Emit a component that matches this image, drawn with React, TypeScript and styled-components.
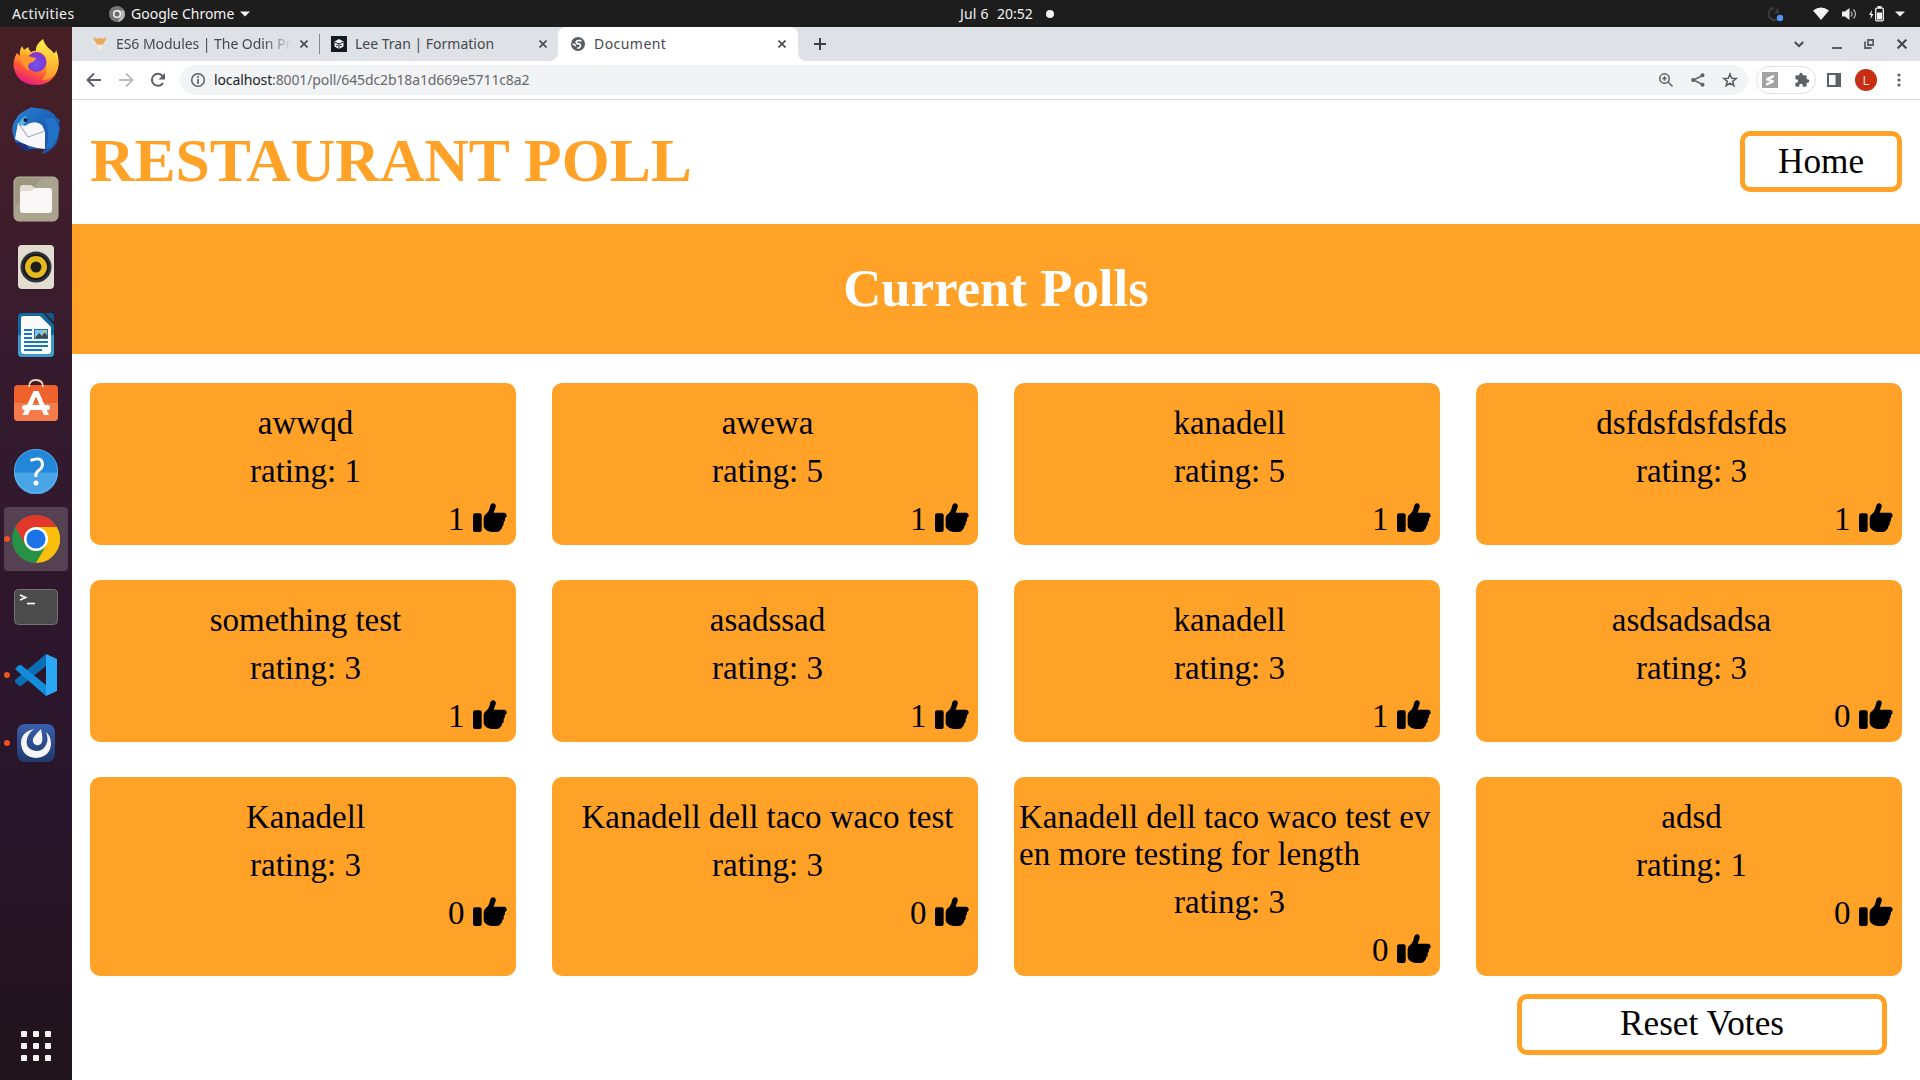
import React from "react";
import styled, { createGlobalStyle, css } from "styled-components";

const orange = "#ffa227";
const ui = `"Noto Sans", "Open Sans", sans-serif`;

const Global = createGlobalStyle`
  *, *::before, *::after { box-sizing: border-box; }
  html, body { margin: 0; padding: 0; overflow: hidden; background: #fff; }
  button { font: inherit; color: inherit; }
`;

const Desktop = styled.div`
  width: 1920px;
  height: 1080px;
  display: grid;
  grid-template: 27px 1fr / 72px 1fr;
  font-family: ${ui};
`;

const TopBar = styled.header`
  grid-column: 1 / 3;
  display: grid;
  grid-template-columns: 948px auto 1fr;
  align-items: center;
  background: #1d1d1d;
  color: #f2f2f2;
  font-size: 14px;
  line-height: 27px;
  padding: 0 7px 0 12px;
`;

const BarGroup = styled.div<{ $end?: boolean }>`
  display: flex;
  align-items: center;
  height: 27px;
  ${(p) => p.$end && css`justify-content: flex-end;`}
  svg { display: block; }
`;

const BarText = styled.span<{ $w: number; $ls?: number }>`
  width: ${(p) => p.$w}px;
  letter-spacing: ${(p) => p.$ls ?? 0}px;
  white-space: nowrap;
`;

const Gap = styled.span<{ $w: number }>`
  flex: none;
  width: ${(p) => p.$w}px;
`;

const Dock = styled.nav`
  display: flex;
  flex-direction: column;
  align-items: center;
  gap: 4px;
  padding: 4px 0 2px;
  background: linear-gradient(#472025 0, #421e2a 12%, #371b2e 30%, #2e172c 55%, #28152a 75%, #23141f 90%, #20141c 100%);
`;

const DockItem = styled.div<{ $active?: boolean; $running?: boolean; $last?: boolean; $lift?: number }>`
  width: 64px;
  height: 64px;
  padding-bottom: ${(p) => (p.$lift ?? 0) * 2}px;
  border-radius: 4px;
  display: flex;
  align-items: center;
  justify-content: center;
  position: relative;
  ${(p) => p.$active && css`background: #564152;`}
  ${(p) => p.$last && css`margin-top: auto;`}
  ${(p) =>
    p.$running &&
    css`
      &::before {
        content: "";
        position: absolute;
        left: 0;
        top: 29px;
        width: 6px;
        height: 6px;
        border-radius: 50%;
        background: #e95420;
      }
    `}
  svg { display: block; }
`;

const Browser = styled.section`
  display: flex;
  flex-direction: column;
  min-width: 0;
  background: #fff;
`;

const TabStrip = styled.div`
  flex: none;
  height: 34px;
  display: flex;
  align-items: center;
  background: #dee1e6;
  color: #45494d;
  font-size: 14px;
`;

const Tab = styled.div<{ $w: number; $active?: boolean; $divider?: boolean; $pad: number }>`
  width: ${(p) => p.$w}px;
  height: 34px;
  display: flex;
  align-items: center;
  padding: 0 9px 0 ${(p) => p.$pad}px;
  position: relative;
  svg { display: block; flex: none; }
  ${(p) =>
    p.$active &&
    css`
      background: #fff;
      border-radius: 8px 8px 0 0;
      &::before, &::after {
        content: "";
        position: absolute;
        bottom: 0;
        width: 8px;
        height: 8px;
      }
      &::before { left: -8px; background: radial-gradient(circle at 0 0, transparent 7.5px, #fff 8px); }
      &::after { right: -8px; background: radial-gradient(circle at 100% 0, transparent 7.5px, #fff 8px); }
    `}
  ${(p) =>
    p.$divider &&
    css`
      &::after {
        content: "";
        position: absolute;
        right: 0;
        top: 7px;
        width: 1px;
        height: 20px;
        background: #85898e;
      }
    `}
`;

const TabTitle = styled.span<{ $fade?: boolean; $ls?: number }>`
  flex: 1;
  min-width: 0;
  white-space: nowrap;
  line-height: 20px;
  letter-spacing: ${(p) => p.$ls ?? 0}px;
  ${(p) => p.$fade && css`mask-image: linear-gradient(90deg, #000 calc(100% - 28px), transparent 100%);`}
`;

const WindowControls = styled.div`
  margin-left: auto;
  display: flex;
  align-items: center;
  padding-right: 11px;
  svg { display: block; }
`;

const Toolbar = styled.div`
  flex: none;
  height: 39px;
  display: flex;
  align-items: center;
  border-bottom: 1px solid #d9dbde;
  padding-left: 14px;
  color: #5f6368;
  svg { display: block; flex: none; }
`;

const Address = styled.div`
  width: 1568px;
  height: 30px;
  border-radius: 15px;
  background: #f1f3f4;
  display: flex;
  align-items: center;
  padding: 0 10px;
  font-size: 14px;
  line-height: 20px;
`;

const Url = styled.span`
  flex: 1;
  margin-left: 8px;
  letter-spacing: -0.12px;
  color: #67696d;
  b { font-weight: 400; color: #202124; }
`;

const Extensions = styled.div`
  width: 60px;
  height: 28px;
  margin-left: 8px;
  border: 1px solid #dfe1e4;
  border-radius: 14px;
  display: flex;
  align-items: center;
  justify-content: space-between;
  padding: 0 5px;
`;

const Avatar = styled.div`
  width: 22px;
  height: 22px;
  border-radius: 50%;
  background: #c62f14;
  color: #f0dcd8;
  font: 13px/22px ${ui};
  text-align: center;
`;

const Page = styled.main`
  flex: 1;
  display: flex;
  flex-direction: column;
  font-family: "Liberation Serif", "Times New Roman", serif;
  font-size: 33px;
  line-height: 37px;
  color: #000;
`;

const PageHeader = styled.div`
  height: 124px;
  display: flex;
  align-items: center;
  justify-content: space-between;
  padding: 0 18px 1px;
`;

const Brand = styled.h1`
  margin: 0;
  padding-bottom: 3px;
  color: ${orange};
  font-size: 61.6px;
  line-height: 72px;
  font-weight: 700;
`;

const OutlineButton = styled.button<{ $w: number; $top?: number }>`
  width: ${(p) => p.$w}px;
  height: 61px;
  padding: ${(p) => p.$top ?? 0}px 0 1px;
  border: 5px solid ${orange};
  border-radius: 10px;
  background: #fff;
  font-size: 35.2px;
  line-height: 40px;
`;

const Banner = styled.h2`
  margin: 0;
  height: 130px;
  background: ${orange};
  color: #fff;
  font-size: 52.8px;
  line-height: 128px;
  font-weight: 700;
  text-align: center;
`;

const Grid = styled.div`
  display: grid;
  grid-template-columns: repeat(4, 426px);
  grid-template-rows: 162px 162px 199px;
  gap: 35px 36px;
  padding: 29px 18px 0;
`;

const Card = styled.article`
  background: ${orange};
  border-radius: 10px;
  padding: 22px 0 0 5px;
  display: flex;
  flex-direction: column;
  align-items: center;
  gap: 11px;
`;

const Name = styled.div`
  word-break: break-all;
`;

const Votes = styled.div`
  align-self: flex-end;
  display: flex;
  align-items: flex-start;
  gap: 8px;
  padding-right: 9.5px;
  svg { display: block; margin-top: 2px; }
`;

const Footer = styled.div`
  display: flex;
  justify-content: flex-end;
  padding: 18px 33px 0 0;
`;

const polls = [
  { name: "awwqd", rating: 1, votes: 1 },
  { name: "awewa", rating: 5, votes: 1 },
  { name: "kanadell", rating: 5, votes: 1 },
  { name: "dsfdsfdsfdsfds", rating: 3, votes: 1 },
  { name: "something test", rating: 3, votes: 1 },
  { name: "asadssad", rating: 3, votes: 1 },
  { name: "kanadell", rating: 3, votes: 1 },
  { name: "asdsadsadsa", rating: 3, votes: 0 },
  { name: "Kanadell", rating: 3, votes: 0 },
  { name: "Kanadell dell taco waco test", rating: 3, votes: 0 },
  { name: "Kanadell dell taco waco test even more testing for length", rating: 3, votes: 0 },
  { name: "adsd", rating: 1, votes: 0 },
];

const Thumb = () => (
  <svg width="34" height="30" viewBox="0 0 102 90">
    <rect x="0" y="31" width="26" height="56" rx="6" />
    <path d="M32 46Q32 37 39 33Q46 29 49 19L52 7Q55 0 62 1Q70 4 68 12L62 29H94Q102 31 101 39Q100 44 96 45Q98 53 92 58Q94 66 88 70Q88 77 83 80Q80 87 70 87H55Q43 86 36 78Q32 74 32 68Z" />
  </svg>
);

const Caret = ({ w = 10 }: { w?: number }) => (
  <svg width={w} height="6" viewBox="0 0 10 6"><path d="M0 .5h10L5 5.500z" fill="#f2f2f2" /></svg>
);

const Close = ({ s = 8, w = 1.6 }: { s?: number; w?: number }) => (
  <svg width={s} height={s} viewBox="0 0 8 8" stroke="#45494d" strokeWidth={w}><path d="M.5.5l7 7M7.500.5l-7 7" /></svg>
);

const FirefoxIcon = () => (
  <svg width="48" height="48" viewBox="0 0 48 48">
    <defs>
      <linearGradient id="ffa" x1=".8" y1=".05" x2=".3" y2="1">
        <stop offset="0" stopColor="#fff44f" /><stop offset=".35" stopColor="#ffb52b" />
        <stop offset=".65" stopColor="#ff5a36" /><stop offset="1" stopColor="#e31587" />
      </linearGradient>
      <radialGradient id="ffb" cx=".5" cy=".6" r=".6"><stop offset="0" stopColor="#7a52f5" /><stop offset=".6" stopColor="#7540d8" /><stop offset="1" stopColor="#a02bc0" /></radialGradient>
      <linearGradient id="ffc" x1="0" y1="0" x2="0" y2="1"><stop offset="0" stopColor="#fff04a" /><stop offset="1" stopColor="#ff9a2b" /></linearGradient>
    </defs>
    <path d="M8 18Q7 13 10 8L12 12L16 9Q17 12 19 14Q24 11 30 14L38 14Q44 17 44 12Q48 22 46 30Q42 45 27 47Q7 48 2 31Q0 23 5 15Z" fill="url(#ffa)" />
    <path d="M24 13Q23 7 31 1Q33 8 39 12Q48 20 46 30Q42 42 30 42Q37 35 34 26Q32 16 24 13Z" fill="url(#ffc)" />
    <circle cx="24.500" cy="24" r="10" fill="url(#ffb)" />
    <path d="M8 18Q13 15 16 18L24 20Q24 23 18 25Q14 28 18 33Q11 31 8 18Z" fill="#ff982b" />
  </svg>
);

const ThunderbirdIcon = () => (
  <svg width="50" height="50" viewBox="0 0 50 50">
    <defs><linearGradient id="tb" x1="0" y1="0" x2="1" y2="1"><stop offset="0" stopColor="#2b85d6" /><stop offset=".5" stopColor="#1c62b8" /><stop offset="1" stopColor="#1b4fa5" /></linearGradient></defs>
    <path d="M4 35Q-2 22 5 13Q8 7 17 3L21 1L23 2Q39 1 46 12L49 14L48 18L49 22L48 28L47 33L45 38Q40 46 30 48L34 43H18Q8 42 4 35Z" fill="url(#tb)" />
    <path d="M5 36Q11 45 19 46L15 38Z" fill="#1d2f79" />
    <path d="M7 17Q14 22 17 18Q25 14 31 19L34 26L34 43Q18 42 4 33Z" fill="#f8f8fa" />
    <path d="M8 18L17 31L34 25" fill="none" stroke="#a9adb8" strokeWidth="1.200" />
    <path d="M32 12Q41 22 35 43Q42 42 45 35Q51 23 43 12Z" fill="#2273c8" />
    <path d="M8 20Q8 13 15 10Q18 14 12 19Z" fill="#5bb3e8" />
    <circle cx="14.500" cy="14" r="2" fill="#16233f" />
  </svg>
);

const FilesIcon = () => (
  <svg width="46" height="46" viewBox="0 0 46 46">
    <rect x="1" y="1" width="44" height="44" rx="5" fill="#9e9780" stroke="#bbb5a3" />
    <path d="M1.500 30L30 1.500H40Q44.500 2 44.500 6V40Q44 44.500 40 44.500H6Q1.500 44 1.500 40Z" fill="#aaa48f" />
    <path d="M7 12Q7 9 10 9H18L22 12V22H7Z" fill="#e2ddd0" />
    <path d="M7 18Q7 15 10 15H18L22 12H36Q39 12 39 15V34Q39 37 36 37H10Q7 37 7 34Z" fill="#f9f8f6" />
  </svg>
);

const RhythmboxIcon = () => (
  <svg width="38" height="46" viewBox="0 0 38 46">
    <rect x="1" y="1" width="36" height="44" rx="4" fill="#e2ddd0" />
    <circle cx="19" cy="23" r="15.500" fill="#30323a" /><circle cx="19" cy="23" r="13" fill="#17181b" />
    <circle cx="19" cy="23" r="11" fill="#e6b91d" /><circle cx="19" cy="23" r="5.500" fill="#1f1f1f" />
  </svg>
);

const WriterIcon = () => (
  <svg width="38" height="46" viewBox="0 0 38 46">
    <path d="M5 1H26L37 13V41Q37 45 33 45H5Q1 45 1 41V5Q1 1 5 1Z" fill="#106a9f" />
    <path d="M1 23H37V41Q37 45 33 45H5Q1 45 1 41Z" fill="#3e9bcb" />
    <path d="M6 4H23L34 15V39Q34 42 31 42H7Q4 42 4 39V7Q4 4 6 4Z" fill="#fafafa" />
    <path d="M28 1H34Q37 1 37 4V10Z" fill="#0e5c8c" />
    <path d="M7 18h8M7 22h8M7 26h8M7 30h24M7 34h24M7 38h18" stroke="#1879b1" strokeWidth="2" />
    <rect x="17.500" y="17.500" width="13" height="9" fill="#7fc5ef" stroke="#1879b1" />
    <path d="M18 26l4-5 3 3 3-4 3 6z" fill="#454545" /><circle cx="28" cy="19.500" r="1.300" fill="#f2c230" />
  </svg>
);

const SoftwareIcon = () => (
  <svg width="46" height="46" viewBox="0 0 46 46">
    <rect x="1" y="8" width="44" height="36" rx="4" fill="#f0622c" />
    <path d="M1 26H45V40Q45 44 41 44H5Q1 44 1 40Z" fill="#f47b4c" />
    <path d="M16 10Q16 3 23 3Q30 3 30 10" fill="none" stroke="#e9d9ae" strokeWidth="1.800" />
    <path d="M20.500 14H25.500L36 38H31L23 19.500L15 38H9.500Z" fill="#fff" />
    <rect x="9" y="28" width="28" height="5" rx="2.500" fill="#fff" />
  </svg>
);

const HelpIcon = () => (
  <svg width="46" height="46" viewBox="0 0 46 46">
    <circle cx="23" cy="23" r="22" fill="#2287d8" />
    <path d="M1 24.500H45A22 22 0 0 1 1 24.500Z" fill="#48a4e5" />
    <circle cx="23" cy="23" r="21.600" fill="none" stroke="#6db9ec" strokeWidth=".7" />
    <path d="M17.500 12.500Q29 8 29.500 16Q29.500 20 25.500 22.500Q22.500 24.500 22.800 29" fill="none" stroke="#fff" strokeWidth="3" />
    <circle cx="23" cy="35" r="2.500" fill="#fff" />
  </svg>
);

const ChromeIcon = () => (
  <svg width="48" height="48" viewBox="0 0 48 48">
    <circle cx="24" cy="24" r="24" fill="#279245" />
    <path d="M3.200 12A24 24 0 0 1 44.800 12H24L13.600 30Z" fill="#e2382b" />
    <path d="M44.800 12A24 24 0 0 1 24 48L34.400 30L24 12Z" fill="#fbbf0b" />
    <circle cx="24" cy="24" r="12" fill="#fff" /><circle cx="24" cy="24" r="9.600" fill="#1c73e8" />
  </svg>
);

const TerminalIcon = () => (
  <svg width="46" height="38" viewBox="0 0 46 38">
    <rect x="1.500" y="1.500" width="43" height="35" rx="4" fill="#4b4b4b" stroke="#747474" />
    <path d="M7 7L12.500 9.500L7 12" fill="none" stroke="#fff" strokeWidth="1.800" /><path d="M14 15.500h8" stroke="#fff" strokeWidth="1.600" />
  </svg>
);

const CodeIcon = () => (
  <svg width="44" height="44" viewBox="0 0 44 44">
    <path d="M32 1V13L7 33L5 33L1 29V27Z" fill="#0a6eb4" />
    <path d="M1 16L5 12H7L32 32V43Z" fill="#138dd9" />
    <path d="M32 1L43 6V38L32 43Z" fill="#2aa8f5" />
  </svg>
);

const MattermostIcon = () => (
  <svg width="40" height="40" viewBox="0 0 40 40">
    <defs><linearGradient id="mm" x1="0" y1="0" x2="0" y2="1"><stop offset="0" stopColor="#3b5fae" /><stop offset="1" stopColor="#203a6d" /></linearGradient></defs>
    <rect x="1" y="1" width="38" height="38" rx="8" fill="url(#mm)" />
    <path d="M18 6Q5 9 5 20Q6 34 20 35Q34 34 35 21Q35 13 30 9Q33 16 30 22Q27 28 20 28Q11 27 10.500 19Q11 11 18 6Z" fill="#f6f6f7" />
    <path d="M25 6Q27 15 26 19Q24 23 20 22Q16 20 17 16Q18 13 25 6Z" fill="#f6f6f7" />
  </svg>
);

const GridIcon = () => (
  <svg width="30" height="30" viewBox="0 0 30 30" fill="#f3f2f0">
    {[0, 12, 24].map((y) => [0, 12, 24].map((x) => <rect key={`${x}-${y}`} x={x} y={y} width="6" height="6" rx="1" />))}
  </svg>
);

export default function App() {
  return (
    <>
      <Global />
      <Desktop>
        <TopBar>
          <BarGroup>
            <BarText $w={97} $ls={0.42}>Activities</BarText>
            <svg width="16" height="16" viewBox="0 0 16 16">
              <circle cx="8" cy="8" r="8" fill="#777" /><path d="M8 4.500h7A8 8 0 0 1 9 16L12 9Z" fill="#b8b8b8" />
              <circle cx="8" cy="8" r="3.300" fill="#6c6c6c" stroke="#f4f4f4" strokeWidth="1.500" />
            </svg>
            <Gap $w={6} />
            <BarText $w={109}>Google Chrome</BarText>
            <Caret />
          </BarGroup>
          <BarGroup>
            <BarText $w={37} $ls={0.2}>Jul 6</BarText>
            <BarText $w={49}>20:52</BarText>
            <svg width="8" height="8"><circle cx="4" cy="4" r="4" fill="#f2f2f2" /></svg>
          </BarGroup>
          <BarGroup $end>
            <svg width="16" height="16" viewBox="0 0 16 16">
              <path d="M6 2A6 6 0 1 0 11 12" fill="none" stroke="#3c3c3c" strokeWidth="2" /><path d="M10 1L6 8L11 7Z" fill="#3c3c3c" />
              <circle cx="12" cy="12" r="3.200" fill="#5294f5" />
            </svg>
            <Gap $w={29} />
            <svg width="16" height="13" viewBox="0 0 16 13"><path d="M0 3.500Q8-2.500 16 3.500L8 13Z" fill="#f2f2f2" /></svg>
            <Gap $w={13} />
            <svg width="15" height="14" viewBox="0 0 15 14"><path d="M0 4.500h3L7.500 1v12L3 9.500H0Z" fill="#f2f2f2" /><path d="M9 4.500q2 2.500 0 5M11.500 2.500q4 4.500 0 9" fill="none" stroke="#bbb" strokeWidth="1.200" /></svg>
            <Gap $w={12} />
            <svg width="15" height="16" viewBox="0 0 15 16"><path d="M3 4L0 9h2l-.5 4L4.500 8h-2Z" fill="#f2f2f2" /><rect x="6.700" y="2.200" width="7.600" height="12.600" rx="1" fill="none" stroke="#f2f2f2" strokeWidth="1.300" /><path d="M8 6.500h5v7H8zM8.500 0h4v2h-4z" fill="#f2f2f2" /></svg>
            <Gap $w={11} />
            <Caret />
            <Gap $w={8} />
          </BarGroup>
        </TopBar>

        <Dock>
          <DockItem $lift={1}><FirefoxIcon /></DockItem>
          <DockItem><ThunderbirdIcon /></DockItem>
          <DockItem><FilesIcon /></DockItem>
          <DockItem><RhythmboxIcon /></DockItem>
          <DockItem><WriterIcon /></DockItem>
          <DockItem $lift={3}><SoftwareIcon /></DockItem>
          <DockItem><HelpIcon /></DockItem>
          <DockItem $active $running><ChromeIcon /></DockItem>
          <DockItem><TerminalIcon /></DockItem>
          <DockItem $running><CodeIcon /></DockItem>
          <DockItem $running><MattermostIcon /></DockItem>
          <DockItem $last><GridIcon /></DockItem>
        </Dock>

        <Browser>
          <TabStrip>
            <Tab $w={248} $pad={21} $divider>
              <svg width="14" height="16" viewBox="0 0 14 16">
                <path d="M1 0Q0 4 3 6L4 10H10L11 6Q14 4 12.500 0Q12 3 10 3Q7 1 4 3Q2 3 1 0Z" fill="#e8a95c" />
                <path d="M4 8L7 9L10 8L10 12L7 15.500L4 12Z" fill="#efe9e4" />
              </svg>
              <Gap $w={9} />
              <TabTitle $fade $ls={-0.05}>ES6 Modules | The Odin Pr</TabTitle>
              <Gap $w={8} /><Close /><Gap $w={3} />
            </Tab>
            <Tab $w={238} $pad={11}>
              <svg width="16" height="16" viewBox="0 0 16 16">
                <rect width="16" height="16" fill="#111a24" /><path d="M8 3L12.500 5.500V10.500L8 13L3.500 10.500V5.500Z" fill="#f4f4f4" />
                <path d="M3.500 6L8 8L12.500 6M8 8V13" stroke="#111a24" fill="none" /><circle cx="6" cy="9.500" r=".8" fill="#111a24" /><circle cx="10" cy="9.500" r=".8" fill="#111a24" />
              </svg>
              <Gap $w={8} />
              <TabTitle>Lee Tran | Formation</TabTitle>
              <Close /><Gap $w={2} />
            </Tab>
            <Tab $w={240} $active $pad={13}>
              <svg width="14" height="14" viewBox="0 0 14 14">
                <circle cx="7" cy="7" r="7" fill="#5a5e63" />
                <path d="M10.500 3.600H7.500Q5.200 3.800 5.200 5.300Q5.200 6.800 7.500 6.900Q9.800 7.200 9.500 9Q9 11 6.200 11.300M1.600 7Q4 7.200 4.600 9.300" fill="none" stroke="#fff" strokeWidth="1.600" />
              </svg>
              <Gap $w={9} />
              <TabTitle $ls={0.45}>Document</TabTitle>
              <Close /><Gap $w={3} />
            </Tab>
            <Gap $w={16} />
            <svg width="12" height="12" viewBox="0 0 12 12" stroke="#3c4043" strokeWidth="2"><path d="M6 0v12M0 6h12" /></svg>
            <WindowControls>
              <svg width="10" height="7" viewBox="0 0 10 7" fill="none" stroke="#45494d" strokeWidth="2"><path d="M.8 1L5 5.200L9.200 1" /></svg>
              <Gap $w={28} />
              <svg width="10" height="10"><path d="M0 9h10" stroke="#5b6066" strokeWidth="2" /></svg>
              <Gap $w={22} />
              <svg width="10" height="10" viewBox="0 0 10 10" fill="none" stroke="#5b6066" strokeWidth="1.800"><path d="M4 1h5.200v5H4zM1 2.500V9h6.500" /></svg>
              <Gap $w={23} />
              <Close s={10} w={1.7} />
              <Gap $w={2} />
            </WindowControls>
          </TabStrip>

          <Toolbar>
            <svg width="16" height="16" viewBox="0 0 16 16" fill="none" stroke="#5b6066" strokeWidth="2"><path d="M15 8H2M8 1.500L1.500 8L8 14.500" /></svg>
            <Gap $w={16} />
            <svg width="16" height="16" viewBox="0 0 16 16" fill="none" stroke="#b9bbbe" strokeWidth="1.900"><path d="M1 8H14M8 1.500L14.500 8L8 14.500" /></svg>
            <Gap $w={16} />
            <svg width="16" height="16" viewBox="0 0 16 16"><path d="M13 11A6 6 0 1 1 12.500 4" fill="none" stroke="#5b6066" strokeWidth="2" /><path d="M15 1V7.500H8.500Z" fill="#5b6066" /></svg>
            <Gap $w={14} />
            <Address>
              <svg width="16" height="16" viewBox="0 0 16 16"><circle cx="8" cy="8" r="6.300" fill="none" stroke="#5b6066" strokeWidth="1.500" /><path d="M7.200 4h1.700v1.800H7.200zM7.200 7h1.700v5H7.200z" fill="#5b6066" /></svg>
              <Url><b>localhost</b>:8001/poll/645dc2b18a1d669e5711c8a2</Url>
              <svg width="16" height="16" viewBox="0 0 16 16" fill="none" stroke="#5b6066" strokeWidth="1.500"><circle cx="6.500" cy="6.500" r="4.700" /><path d="M10 10L14.500 14.500M4.300 6.500h4.400M6.500 4.300v4.400" /></svg>
              <Gap $w={17} />
              <svg width="14" height="14" viewBox="0 0 14 14" stroke="#5b6066" strokeWidth="1.400"><path d="M11.500 2.500L2.500 7L11.500 11.500" fill="none" /><circle cx="11.500" cy="2.200" r="1.300" fill="#5b6066" /><circle cx="2.200" cy="7" r="1.300" fill="#5b6066" /><circle cx="11.500" cy="11.800" r="1.300" fill="#5b6066" /></svg>
              <Gap $w={17} />
              <svg width="16" height="16" viewBox="0 0 16 16"><path d="M8 2L9.700 6.200L14.200 6.500L10.700 9.300L11.900 13.700L8 11.200L4.100 13.700L5.300 9.300L1.800 6.500L6.300 6.200Z" fill="none" stroke="#5b6066" strokeWidth="1.500" /></svg>
            </Address>
            <Extensions>
              <svg width="16" height="16" viewBox="0 0 16 16"><rect width="16" height="16" fill="#a3a3a3" /><path d="M11.800 2.800V5.400L7.600 7.300L11.800 8.200V10.400L4.200 13.800V11.200L8.400 9.300L4.200 8.400V6.200Z" fill="#fff" /></svg>
              <svg width="16" height="16" viewBox="0 0 24 24"><path d="M20.500 11H19V7a2 2 0 0 0-2-2h-4V3.500a2.500 2.500 0 0 0-5 0V5H4a2 2 0 0 0-2 2v3.800h1.500a2.700 2.700 0 0 1 0 5.400H2V20a2 2 0 0 0 2 2h3.800v-1.500a2.700 2.700 0 0 1 5.400 0V22H17a2 2 0 0 0 2-2v-4h1.500a2.500 2.500 0 0 0 0-5Z" fill="#5b6066" /></svg>
            </Extensions>
            <Gap $w={11} />
            <svg width="14" height="14" viewBox="0 0 14 14"><rect width="14" height="14" fill="#5b6066" /><path d="M2 2h6.500v10H2z" fill="#fff" /></svg>
            <Gap $w={14} />
            <Avatar>L</Avatar>
            <Gap $w={20} />
            <svg width="4" height="14" viewBox="0 0 4 14" fill="#5b6066"><circle cx="2" cy="2" r="1.600" /><circle cx="2" cy="7" r="1.600" /><circle cx="2" cy="12" r="1.600" /></svg>
          </Toolbar>

          <Page>
            <PageHeader>
              <Brand>RESTAURANT POLL</Brand>
              <OutlineButton $w={162} $top={2}>Home</OutlineButton>
            </PageHeader>
            <Banner>Current Polls</Banner>
            <Grid>
              {polls.map((p, i) => (
                <Card key={i}>
                  <Name>{p.name}</Name>
                  <div>rating: {p.rating}</div>
                  <Votes>{p.votes}<Thumb /></Votes>
                </Card>
              ))}
            </Grid>
            <Footer><OutlineButton $w={370}>Reset Votes</OutlineButton></Footer>
          </Page>
        </Browser>
      </Desktop>
    </>
  );
}
